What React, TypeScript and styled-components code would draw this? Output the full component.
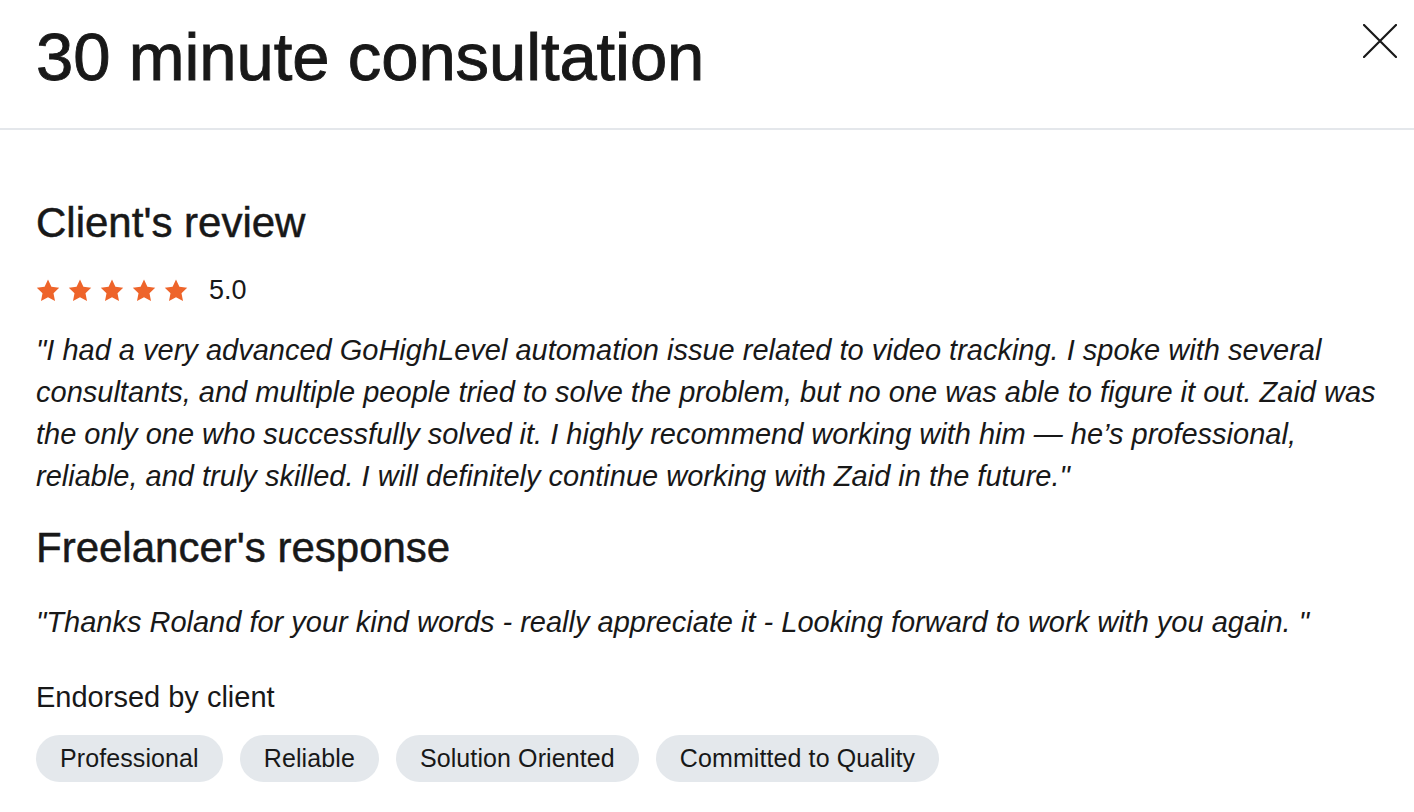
import styled, { createGlobalStyle } from 'styled-components';

const GlobalStyle = createGlobalStyle`
    html, body {
        margin: 0;
        padding: 0;
        background: #ffffff;
    }
    body {
        font-family: "Liberation Sans", Arial, sans-serif;
        color: #181818;
    }
`

const Modal = styled.div`
    width: 1414px;
    height: 812px;
    overflow: hidden;
    background: #ffffff;
`

const Header = styled.header`
    display: flex;
    justify-content: space-between;
    align-items: flex-start;
    padding: 17px 17px 31px 36px;
    border-bottom: 2px solid #e4e7eb;
`

const Title = styled.h1`
    margin: 0;
    font-size: 67px;
    line-height: 80px;
    font-weight: 400;
    letter-spacing: -0.1px;
    -webkit-text-stroke: 0.9px #181818;
`

const CloseButton = styled.button`
    margin-top: 7px;
    padding: 0;
    border: none;
    background: none;
    width: 34px;
    height: 34px;
    cursor: pointer;
    color: #181818;
`

const Body = styled.section`
    padding: 68px 32px 0 36px;
`

const Heading = styled.h2<{ $gap: number }>`
    margin: ${props => props.$gap}px 0 0;
    font-size: 42px;
    line-height: 50px;
    font-weight: 400;
    -webkit-text-stroke: 0.5px #181818;
`

const Rating = styled.div`
    display: flex;
    align-items: center;
    gap: 21px;
    margin-top: 27px;
    height: 30px;
`

const Stars = styled.div`
    display: flex;
    gap: 8px;
    color: #ee642a;
`

const Score = styled.span`
    font-size: 27px;
    line-height: 30px;
`

const Quote = styled.p<{ $gap: number }>`
    margin: ${props => props.$gap}px 0 0;
    font-size: 29px;
    line-height: 42px;
    font-style: italic;
`

const Label = styled.div`
    margin-top: 36px;
    font-size: 29px;
    line-height: 36px;
`

const Chips = styled.div`
    display: flex;
    gap: 17px;
    margin-top: 20px;
`

const Chip = styled.span`
    height: 47px;
    padding: 0 24px;
    border-radius: 24px;
    background: #e4e8ec;
    font-size: 25px;
    line-height: 47px;
    letter-spacing: 0.1px;
    white-space: nowrap;
`

function Star() {
    return (
        <svg width="24" height="23" viewBox="0 0 24 23" fill="currentColor">
            <path d="M12 0.6l3.4 7.2 7.8 1-5.7 5.4 1.5 7.8L12 18.2 5 22l1.5-7.8L0.8 8.8l7.8-1z" />
        </svg>
    )
}

const endorsements = ['Professional', 'Reliable', 'Solution Oriented', 'Committed to Quality'];

function App() {
    return (
        <Modal>
            <GlobalStyle />
            <Header>
                <Title>30 minute consultation</Title>
                <CloseButton aria-label="Close">
                    <svg width="34" height="34" viewBox="0 0 34 34" stroke="currentColor" strokeWidth="2.2" strokeLinecap="round">
                        <path d="M1 1l32 32M33 1L1 33" />
                    </svg>
                </CloseButton>
            </Header>

            <Body>
                <Heading $gap={0}>Client's review</Heading>
                <Rating>
                    <Stars>
                        {[0, 1, 2, 3, 4].map(i => <Star key={i} />)}
                    </Stars>
                    <Score>5.0</Score>
                </Rating>
                <Quote $gap={24}>
                    "I had a very advanced GoHighLevel automation issue related to video tracking. I spoke with several consultants, and multiple people tried to solve the problem, but no one was able to figure it out. Zaid was the only one who successfully solved it. I highly recommend working with him — he’s professional, reliable, and truly skilled. I will definitely continue working with Zaid in the future."
                </Quote>

                <Heading $gap={26}>Freelancer's response</Heading>
                <Quote $gap={28}>
                    "Thanks Roland for your kind words - really appreciate it - Looking forward to work with you again. "
                </Quote>

                <Label>Endorsed by client</Label>
                <Chips>
                    {endorsements.map(e => <Chip key={e}>{e}</Chip>)}
                </Chips>
            </Body>
        </Modal>
    );
}

export default App;
